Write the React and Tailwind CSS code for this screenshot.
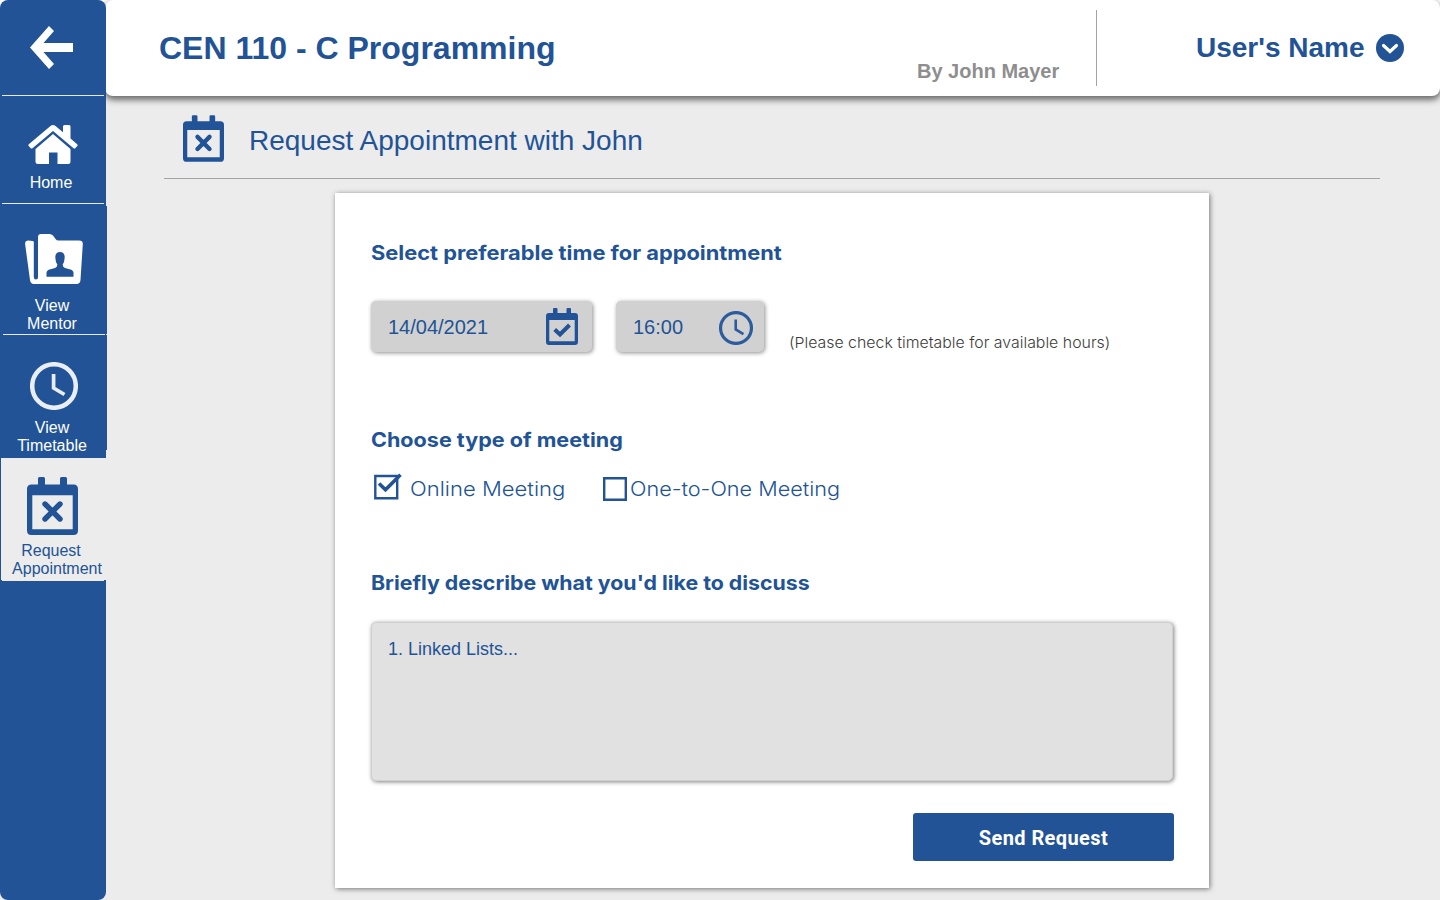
const line = "h-px bg-[#e6ebf3] shrink-0";

function CalendarX({ className }) {
  return (
    <svg className={className} viewBox="0 0 51 58" fill="none">
      <path
        fill="#215396"
        fillRule="evenodd"
        d="M11 1.500Q11 0 12.500 0H16.500Q18 0 18 1.500V7.500H33V1.500Q33 0 34.500 0H38.500Q40 0 40 1.500V7.500H46.500Q51 7.500 51 12V53.500Q51 58 46.500 58H4.500Q0 58 0 53.500V12Q0 7.500 4.500 7.500H11ZM5.300 18.300V52.300H45.700V18.300Z"
      />
      <path d="M18 27L33 42M33 27L18 42" stroke="#215396" strokeWidth="5.400" strokeLinecap="round" />
    </svg>
  );
}

function CalendarCheck() {
  return (
    <svg className="h-[37px] w-8" viewBox="0 0 32 37" fill="none">
      <path
        fill="#215396"
        fillRule="evenodd"
        d="M7 1Q7 0 8 0H10.500Q11.500 0 11.500 1V5H20.500V1Q20.500 0 21.500 0H24Q25 0 25 1V5H29Q32 5 32 8V34Q32 37 29 37H3Q0 37 0 34V8Q0 5 3 5H7ZM3.300 12V33.300H28.700V12Z"
      />
      <path d="M8.700 21.500L14 26.500L23.500 17" stroke="#215396" strokeWidth="4" />
    </svg>
  );
}

function Clock({ className }) {
  return (
    <svg className={className} viewBox="0 0 48 48" fill="none" stroke="currentColor">
      <circle cx="24" cy="24" r="21.800" strokeWidth="4.500" />
      <path d="M23.600 12V26L34.500 32.500" strokeWidth="3.700" />
    </svg>
  );
}

function Sidebar() {
  return (
    <nav className="z-10 flex h-[900px] w-[106px] shrink-0 flex-col rounded-lg bg-[#215396] text-center text-[16px] leading-[18px] text-white">
      <div className="flex h-[95px] shrink-0 pt-[26px] pl-[30px]">
        <svg className="h-[43px] w-[43px]" viewBox="0 0 43 43" fill="white">
          <path d="M0 21.500L19 0L24 5L13.500 17H43V26H13.500L24 38L19 43Z" />
        </svg>
      </div>
      <div className={line + " mx-0.5"} />
      <div className="flex h-[107px] shrink-0 flex-col items-center pt-[29px]">
        <svg className="h-[39px] w-[50px]" viewBox="0 0 50 39" fill="white">
          <path d="M7.500 24L25 9L42.500 24V36.500Q42.500 39 40 39H29.500V27.500H21V39H10Q7.500 39 7.500 36.500Z" />
          <path d="M22.500 1Q25 -1 27.500 1L35 7.200V1.500Q35 0 36.500 0H41Q42.500 0 42.500 1.500V13.500L49.200 19.300Q50 20 49.300 21L47.500 23Q46.500 24 45.500 23.200L25 6L4.500 23.200Q3.500 24 2.500 23L0.700 21Q0 20 0.800 19.300Z" />
        </svg>
        <span className="mt-[10px] -ml-1">Home</span>
      </div>
      <div className={line + " mx-0.5"} />
      <div className="mt-0.5 flex h-[128px] w-[107px] shrink-0 flex-col items-center bg-[#215396] pt-[28px]">
        <svg className="ml-px h-[50px] w-[58px]" viewBox="0 0 58 50" fill="white">
          <path d="M13 3Q13 0 16 0H24.500Q26.500 0 28 1.500L31 5.500Q31.500 6.500 33.500 6.500H54Q58 6.500 57.800 10L55.500 46Q55.200 50 51.500 50H8.500V46.500Q13 46.500 13 43Z" />
          <path d="M3.500 6.500Q8.800 6.500 8.800 8V43Q9 45.500 10.800 45.500L13 45V50H9Q5.500 50 5 46L0.100 10Q0 6.500 3.500 6.500Z" />
          <path fill="#215396" d="M21.500 42.800V39Q21.500 36.500 24.500 35.500L30 34Q32.500 33 32.300 30.500Q30.500 28 30.300 23.500Q30.300 18 35 18Q39.700 18 39.700 23.500Q39.500 28 37.700 30.500Q37.500 33 40 34L45.500 35.500Q48.500 36.500 48.500 39V42.800Z" />
        </svg>
        <span className="mt-[13px] -ml-[3px]">
          View
          <br />
          Mentor
        </span>
      </div>
      <div className={line + " ml-[3px] w-[102px]"} />
      <div className="mb-[7px] flex h-[115px] w-[107px] shrink-0 flex-col items-center bg-[#215396] pt-[27px]">
        <Clock className="ml-px h-12 w-12 shrink-0 text-[#e9eef5]" />
        <span className="mt-[9px] -ml-[3px]">
          View
          <br />
          Timetable
        </span>
      </div>
      <div className="-mt-px ml-px flex h-[124px] w-[105px] shrink-0 flex-col items-center border-t-2 border-[#215396] bg-[#ececec] pt-[19px] text-[#215396]">
        <CalendarX className="-ml-0.5 h-[58px] w-[51px]" />
        <span className="mt-[7px] pl-[7px]">
          <span className="block pr-3">Request</span>
          Appointment
        </span>
      </div>
      <div className="ml-0.5 h-px w-[102px] shrink-0 bg-[#ececec]" />
    </nav>
  );
}

function Header() {
  return (
    <header className="-ml-px flex h-24 rounded-lg bg-white pl-[54px] shadow-[0_3px_6px_1px_rgba(0,0,0,0.55)]">
      <h1 className="w-[758px] pt-[28px] text-[32px] leading-10 font-bold text-[#215396]">CEN 110 - C Programming</h1>
      <span className="w-[179px] pt-[59px] text-[20px] leading-6 font-bold text-[#8e8e8e]">By John Mayer</span>
      <div className="mt-[10px] h-[76px] w-px bg-[#a3a3a3]" />
      <div className="flex items-center gap-[11px] pl-[99px] text-[28px] font-bold text-[#215396]">
        <span className="whitespace-nowrap">User's Name</span>
        <svg className="h-7 w-7" viewBox="0 0 28 28" fill="none">
          <circle cx="14" cy="14" r="14" fill="#215396" />
          <path d="M7.500 11.500L14 17.500L20.500 11.500" stroke="white" strokeWidth="3.200" strokeLinecap="round" />
        </svg>
      </div>
    </header>
  );
}

const heading = "origin-left self-start font-['Inter'] text-[20px] leading-6 font-bold text-[#215396] whitespace-nowrap";
const field = "flex h-[51px] items-center rounded-[5px] bg-[#d1d1d1] text-[20px] text-[#215396] shadow-[1px_1px_4px_rgba(0,0,0,0.45)]";

export default function App() {
  return (
    <div className="flex h-[900px] w-[1440px] overflow-hidden bg-[linear-gradient(#ffffff_0_20px,#ececec_20px)] font-['Liberation_Sans',sans-serif]">
      <Sidebar />
      <div className="flex w-[1334px] flex-col">
        <Header />
        <main className="flex grow flex-col">
          <div className="mr-[60px] ml-[58px] flex h-[83px] shrink-0 border-b border-[#a3a3a3] pl-[19px]">
            <CalendarX className="mt-[19px] h-[47px] w-[41px]" />
            <h2 className="mt-[29px] ml-[25px] text-[28px] leading-8 text-[#215396]">Request Appointment with John</h2>
          </div>
          <section className="mt-[14px] ml-[229px] flex h-[695px] w-[874px] flex-col bg-white pl-9 shadow-[1px_1px_5px_rgba(0,0,0,0.5)]">
            <h3 className={heading + " mt-[48px] scale-x-[1.091]"}>Select preferable time for appointment</h3>
            <div className="mt-[36px] flex">
              <div className={field + " w-[221px] pl-[17px]"}>
                <span className="w-[158px]">14/04/2021</span>
                <CalendarCheck />
              </div>
              <div className={field + " ml-[24px] w-[148px] pl-[17px]"}>
                <span className="w-[86px]">16:00</span>
                <Clock className="mt-[3px] h-[34px] w-[34px] text-[#2c5c9e]" />
              </div>
              <span className="mt-[32px] ml-[25px] origin-left scale-x-[1.058] self-start font-['Inter'] text-[15px] leading-5 font-light whitespace-nowrap text-[#3c3c3c]">(Please check timetable for available hours)</span>
            </div>
            <h3 className={heading + " mt-[75px] scale-x-[1.078]"}>Choose type of meeting</h3>
            <div className="mt-[21px] flex h-[30px] font-['Inter'] text-[20px] leading-[32px] font-light text-[#215396]">
              <svg className="ml-[3px] h-[28px] w-[28px]" viewBox="0 0 28 28" fill="none" stroke="#215396">
                <path d="M1.300 3H23.200V25.300H1.300Z" strokeWidth="2.400" />
                <path d="M5 10.500L11.500 16.800L26.500 1.800" strokeWidth="3.600" />
              </svg>
              <span className="ml-[8px] w-[193px] origin-left scale-x-[1.102] whitespace-nowrap">Online Meeting</span>
              <svg className="mt-[4px] h-6 w-6" viewBox="0 0 24 24" fill="none" stroke="#215396">
                <path d="M1.200 1.200H22.800V22.800H1.200Z" strokeWidth="2.400" />
              </svg>
              <span className="ml-[3px] origin-left scale-x-[1.082] whitespace-nowrap">One-to-One Meeting</span>
            </div>
            <h3 className={heading + " mt-[68px] scale-x-[1.066]"}>Briefly describe what you'd like to discuss</h3>
            <div className="mt-[27px] h-[159px] w-[802px] shrink-0 rounded-[5px] border border-[#d0d0d0] bg-[#e1e1e1] pt-[14px] pl-4 text-[18px] leading-6 text-[#215396] shadow-[1px_1px_4px_rgba(0,0,0,0.5)]">1. Linked Lists...</div>
            <button className="mt-8 ml-[542px] h-12 w-[261px] shrink-0 rounded-[3px] bg-[#215396] pt-0.5 font-['Roboto'] text-[20px] font-bold tracking-[0.4px] text-white">Send Request</button>
          </section>
        </main>
      </div>
    </div>
  );
}
